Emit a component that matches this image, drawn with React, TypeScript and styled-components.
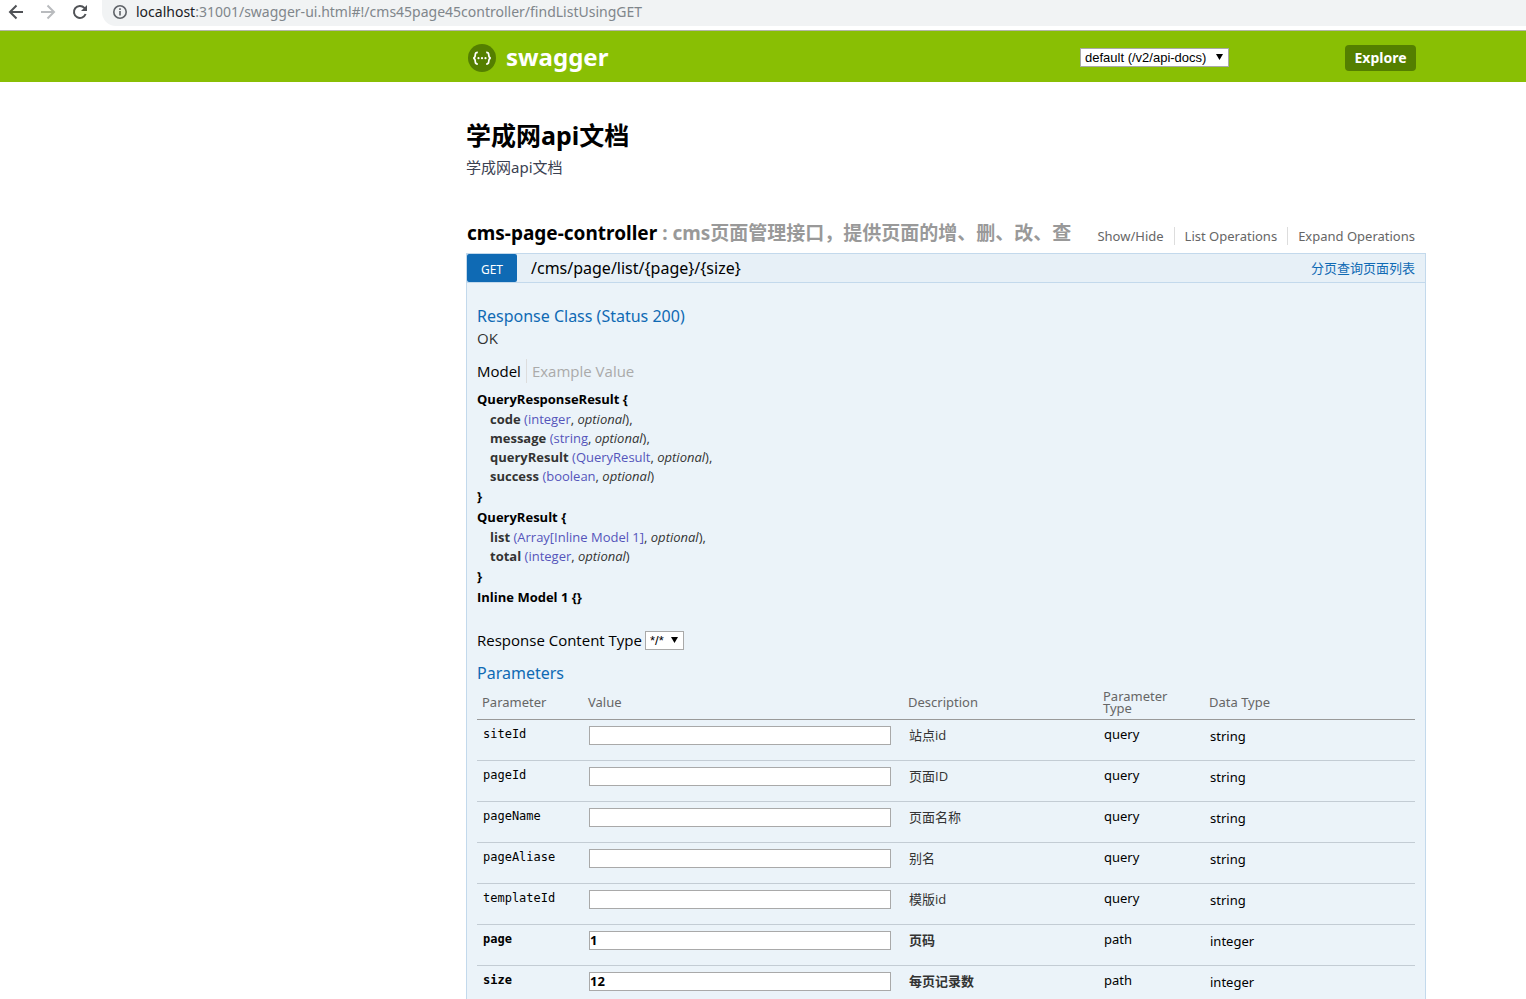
import React from "react";
import styled, { createGlobalStyle } from "styled-components";

const sans = `"Noto Sans", "Noto Sans CJK SC", sans-serif`;
const openSans = `"Open Sans", "Noto Sans CJK SC", sans-serif`;
const arial = `"Liberation Sans", "Noto Sans CJK SC", sans-serif`;

const GlobalStyle = createGlobalStyle`
  *, *::before, *::after { box-sizing: border-box; }
  body { margin: 0; background: #fff; color: #000; font-family: ${sans}; overflow: hidden; }
  h1, h2, h3, h4, p, ul { margin: 0; padding: 0; }
  ul { list-style: none; }
  a { color: inherit; text-decoration: none; }
`;

const Page = styled.div`
  height: 100vh;
  overflow: hidden;
`;

const BrowserBar = styled.div`
  display: flex;
  align-items: flex-start;
  height: 31px;
  padding-left: 6px;
  gap: 12px;
  background: #fff;
  border-bottom: 1px solid #b4b5a8;
`;

const NavButton = styled.button<{ $muted?: boolean }>`
  display: flex;
  align-items: center;
  justify-content: center;
  width: 20px;
  height: 24px;
  padding: 0;
  border: 0;
  background: none;
  color: ${(p) => (p.$muted ? "#b9bbbe" : "#505256")};
`;

const AddressBar = styled.div`
  display: flex;
  align-items: center;
  flex: 1;
  height: 26px;
  padding: 0 0 2px 10px;
  gap: 8px;
  border-radius: 0 0 0 14px;
  background: #f1f3f4;
  color: #5f6368;
`;

const Url = styled.span`
  font-size: 14px;
  line-height: 20px;
  color: #80868b;
  white-space: nowrap;
`;

const Host = styled.span`
  color: #202124;
`;

const Container = styled.div`
  max-width: 960px;
  margin: 0 100px 0 auto;
`;

const Header = styled.header`
  background: #89bf04;
`;

const HeaderRow = styled(Container)`
  display: flex;
  align-items: center;
  height: 51px;
  padding: 2px 10px 0 2px;
`;

const Logo = styled.a`
  display: flex;
  align-items: center;
  gap: 10px;
  margin-right: auto;
  color: #fff;
  font-size: 24px;
  line-height: 28px;
  font-weight: 700;
`;

const LogoText = styled.span`
  padding-bottom: 2px;
`;

const SelectBox = styled.span<{ $gap?: number }>`
  position: relative;
  display: inline-flex;
  margin-right: ${(p) => p.$gap ?? 0}px;

  svg {
    position: absolute;
    right: 6px;
    top: 6px;
    pointer-events: none;
  }
`;

const Select = styled.select<{ $width: number }>`
  appearance: none;
  width: ${(p) => p.$width}px;
  height: 19px;
  margin: 0;
  padding: 0 4px;
  border: 1px solid #a9a9a9;
  border-radius: 0;
  background: #fff;
  color: #000;
  font-family: ${arial};
  font-size: 13px;
  line-height: 17px;
`;

const Explore = styled.button`
  min-width: 71px;
  height: 26px;
  padding: 0 8px;
  border: 0;
  border-radius: 4px;
  background: #547f00;
  color: #fff;
  font-family: ${sans};
  font-size: 14px;
  line-height: 26px;
  font-weight: 700;
`;

const Info = styled.section`
  padding: 36px 0 0;
`;

const Title = styled.h1`
  font-size: 25px;
  line-height: 34px;
  font-weight: 700;
`;

const Description = styled.p`
  margin-top: 4px;
  font-size: 15px;
  line-height: 22px;
  color: #3b4151;
`;

const ResourceHeading = styled.div`
  display: flex;
  align-items: flex-end;
  justify-content: space-between;
  margin-top: 41px;
  padding: 0 11px 0 1px;
`;

const ResourceTitle = styled.h2`
  padding-bottom: 6px;
  font-size: 19px;
  line-height: 28px;
  font-weight: 700;
  color: #999;
  white-space: nowrap;

  a { color: #000; }
`;

const Options = styled.ul`
  display: flex;
  padding-bottom: 8px;
`;

const Option = styled.li`
  padding: 0 10px;
  border-right: 1px solid #ddd;
  font-size: 13px;
  line-height: 18px;
  color: #666;
  white-space: nowrap;

  &:last-child { padding-right: 0; border-right: 0; }
`;

const OperationHeading = styled.div`
  display: flex;
  align-items: center;
  height: 30px;
  padding-right: 10px;
  border: 1px solid #c3d9ec;
  background: #e7f0f7;
`;

const Method = styled.span`
  width: 50px;
  height: 28px;
  border-radius: 2px;
  background: #0f6ab4;
  color: #fff;
  font-size: 12px;
  line-height: 31px;
  text-align: center;
`;

const Path = styled.a`
  margin-left: 14px;
  font-size: 16px;
  line-height: 28px;
`;

const Summary = styled.a`
  && { color: #0f6ab4; }
  margin-left: auto;
  font-size: 13px;
  line-height: 28px;
`;

const OperationBody = styled.div`
  padding: 22px 10px 40px;
  border: 1px solid #c3d9ec;
  border-top: 0;
  background: #ebf3f9;
`;

const SectionTitle = styled.h4`
  font-size: 16px;
  line-height: 22px;
  font-weight: 400;
  color: #0f6ab4;
`;

const Status = styled.p`
  font-family: ${openSans};
  font-size: 15px;
  line-height: 22px;
  color: #333;
`;

const Tabs = styled.div`
  display: flex;
  margin: 10px 0 6px;
`;

const Tab = styled.a<{ $active?: boolean }>`
  && { color: ${(p) => (p.$active ? "#000" : "#aaa")}; }
  padding: 0 5px;
  font-family: ${openSans};
  font-size: 15px;
  line-height: 24px;

  &:first-child { padding-left: 0; border-right: 1px solid #ddd; }
`;

const Model = styled.div`
  margin-bottom: 1px;
  font-family: ${openSans};
  font-size: 13px;
  color: #333;
`;

const ModelBrace = styled.div`
  font-weight: 700;
  line-height: 20px;
  color: #000;
`;

const Fields = styled.div`
  padding: 1px 0 0 13px;
`;

const Field = styled.div`
  line-height: 19px;

  b { font-weight: 700; }
`;

const FieldType = styled.span`
  color: #55b;
`;

const ContentType = styled.div`
  display: flex;
  align-items: center;
  gap: 3px;
  margin: 23px 0 12px;
  font-family: ${openSans};
  font-size: 15px;
  line-height: 20px;
`;

const Params = styled.table`
  width: 100%;
  margin-top: 4px;
  table-layout: fixed;
  border-collapse: separate;
  border-spacing: 0;
  font-size: 13px;
`;

const HeadCell = styled.th<{ $width?: number }>`
  width: ${(p) => (p.$width ? `${p.$width}px` : "auto")};
  padding: 2px 25px 5px 5px;
  border-bottom: 1px solid #999;
  font-weight: 400;
  line-height: 12px;
  text-align: left;
  vertical-align: middle;
  color: #666;
`;

const Cell = styled.td<{ $top?: number }>`
  height: 41px;
  padding: ${(p) => p.$top ?? 6}px 0 0 6px;
  border-bottom: 1px solid #c3ccd4;
  line-height: 18px;
  vertical-align: top;
`;

const Name = styled.label<{ $required: boolean }>`
  display: block;
  font-family: "DejaVu Sans Mono", "Liberation Mono", monospace;
  font-size: 12px;
  line-height: 18px;
  font-weight: ${(p) => (p.$required ? 700 : 400)};
`;

const ValueInput = styled.input`
  display: block;
  width: 302px;
  height: 19px;
  padding: 0 0 2px;
  border: 1px solid #a9a9a9;
  background: #fff;
  color: #000;
  font-family: ${sans};
  font-size: 13px;
  line-height: 15px;
  font-weight: 700;
`;

const Note = styled.span<{ $required: boolean }>`
  color: #333;
  font-family: ${openSans};
  font-weight: ${(p) => (p.$required ? 700 : 400)};
`;

const Arrow = () => (
  <svg width="7" height="7" viewBox="0 0 7 7" aria-hidden="true">
    <path d="M0 0h7L3.5 6z" fill="#000" />
  </svg>
);

const models = [
  {
    name: "QueryResponseResult",
    fields: [
      ["code", "integer"],
      ["message", "string"],
      ["queryResult", "QueryResult"],
      ["success", "boolean"],
    ],
  },
  {
    name: "QueryResult",
    fields: [
      ["list", "Array[Inline Model 1]"],
      ["total", "integer"],
    ],
  },
];

const params = [
  { name: "siteId", value: "", note: "站点id", kind: "query", type: "string", required: false },
  { name: "pageId", value: "", note: "页面ID", kind: "query", type: "string", required: false },
  { name: "pageName", value: "", note: "页面名称", kind: "query", type: "string", required: false },
  { name: "pageAliase", value: "", note: "别名", kind: "query", type: "string", required: false },
  { name: "templateId", value: "", note: "模版id", kind: "query", type: "string", required: false },
  { name: "page", value: "1", note: "页码", kind: "path", type: "integer", required: true },
  { name: "size", value: "12", note: "每页记录数", kind: "path", type: "integer", required: true },
];

export default function App() {
  return (
    <Page>
      <GlobalStyle />
      <BrowserBar>
        <NavButton aria-label="Back">
          <svg width="16" height="16" viewBox="0 0 16 16" fill="none" stroke="currentColor" strokeWidth="2">
            <path d="M15 8H2.5M8.5 1.5L2 8l6.5 6.5" />
          </svg>
        </NavButton>
        <NavButton aria-label="Forward" $muted>
          <svg width="16" height="16" viewBox="0 0 16 16" fill="none" stroke="currentColor" strokeWidth="2">
            <path d="M1 8h12.5M7.5 1.5L14 8l-6.5 6.5" />
          </svg>
        </NavButton>
        <NavButton aria-label="Reload">
          <svg width="16" height="16" viewBox="0 0 16 16" fill="none" stroke="currentColor" strokeWidth="2">
            <path d="M13.6 10A6 6 0 1 1 12.4 3.9L14 5.5" />
            <path d="M15 1v6H9z" fill="currentColor" stroke="none" />
          </svg>
        </NavButton>
        <AddressBar>
          <svg width="16" height="16" viewBox="0 0 16 16" fill="none" stroke="currentColor" strokeWidth="1.6">
            <circle cx="8" cy="8" r="6.2" />
            <path d="M8 7v4.5M8 4.3v1.7" />
          </svg>
          <Url>
            <Host>localhost</Host>:31001/swagger-ui.html#!/cms45page45controller/findListUsingGET
          </Url>
        </AddressBar>
      </BrowserBar>

      <Header>
        <HeaderRow>
          <Logo href="#">
            <svg width="28" height="28" viewBox="0 0 28 28" aria-hidden="true">
              <circle cx="14" cy="14" r="14" fill="#547f00" />
              <g fill="none" stroke="#fff" strokeWidth="1.7">
                <path d="M9.8 8.3C7.6 8.3 7.3 9 7.3 10.6c0 2.2-.2 3.2-2 3.6 1.8.4 2 1.4 2 3.6 0 1.6.3 2.3 2.5 2.3" />
                <path d="M18.2 8.3c2.2 0 2.5.7 2.5 2.3 0 2.2.2 3.2 2 3.6-1.8.4-2 1.4-2 3.6 0 1.6-.3 2.3-2.5 2.3" />
              </g>
              <g fill="#fff">
                <circle cx="10.5" cy="14.2" r="1.1" />
                <circle cx="14" cy="14.2" r="1.1" />
                <circle cx="17.5" cy="14.2" r="1.1" />
              </g>
            </svg>
            <LogoText>swagger</LogoText>
          </Logo>
          <SelectBox $gap={116}>
            <Select $width={149} aria-label="API definition">
              <option>default (/v2/api-docs)</option>
            </Select>
            <Arrow />
          </SelectBox>
          <Explore>Explore</Explore>
        </HeaderRow>
      </Header>

      <Container as="main">
        <Info>
          <Title>学成网api文档</Title>
          <Description>学成网api文档</Description>
        </Info>

        <ResourceHeading>
          <ResourceTitle>
            <a href="#">cms-page-controller</a> : cms页面管理接口，提供页面的增、删、改、查
          </ResourceTitle>
          <Options>
            <Option><a href="#">Show/Hide</a></Option>
            <Option><a href="#">List Operations</a></Option>
            <Option><a href="#">Expand Operations</a></Option>
          </Options>
        </ResourceHeading>

        <OperationHeading>
          <Method>GET</Method>
          <Path href="#">/cms/page/list/&#123;page&#125;/&#123;size&#125;</Path>
          <Summary href="#">分页查询页面列表</Summary>
        </OperationHeading>

        <OperationBody>
          <SectionTitle>Response Class (Status 200)</SectionTitle>
          <Status>OK</Status>
          <Tabs>
            <Tab href="#" $active>Model</Tab>
            <Tab href="#">Example Value</Tab>
          </Tabs>
          {models.map((m) => (
            <Model key={m.name}>
              <ModelBrace>{m.name} &#123;</ModelBrace>
              <Fields>
                {m.fields.map(([name, type], i) => (
                  <Field key={name}>
                    <b>{name}</b> <FieldType>({type}</FieldType>, <i>optional</i>)
                    {i < m.fields.length - 1 ? "," : ""}
                  </Field>
                ))}
              </Fields>
              <ModelBrace>&#125;</ModelBrace>
            </Model>
          ))}
          <Model>
            <ModelBrace>Inline Model 1 &#123;&#125;</ModelBrace>
          </Model>

          <ContentType>
            <label htmlFor="content-type">Response Content Type</label>
            <SelectBox>
              <Select id="content-type" $width={39}>
                <option>*/*</option>
              </Select>
              <Arrow />
            </SelectBox>
          </ContentType>

          <SectionTitle>Parameters</SectionTitle>
          <Params>
            <thead>
              <tr>
                <HeadCell $width={106}>Parameter</HeadCell>
                <HeadCell $width={320}>Value</HeadCell>
                <HeadCell $width={195}>Description</HeadCell>
                <HeadCell $width={106}>Parameter Type</HeadCell>
                <HeadCell>Data Type</HeadCell>
              </tr>
            </thead>
            <tbody>
              {params.map((p) => (
                <tr key={p.name}>
                  <Cell $top={5}>
                    <Name htmlFor={p.name} $required={p.required}>{p.name}</Name>
                  </Cell>
                  <Cell>
                    <ValueInput id={p.name} defaultValue={p.value} />
                  </Cell>
                  <Cell><Note $required={p.required}>{p.note}</Note></Cell>
                  <Cell $top={5}>{p.kind}</Cell>
                  <Cell $top={7}>{p.type}</Cell>
                </tr>
              ))}
            </tbody>
          </Params>
        </OperationBody>
      </Container>
    </Page>
  );
}
